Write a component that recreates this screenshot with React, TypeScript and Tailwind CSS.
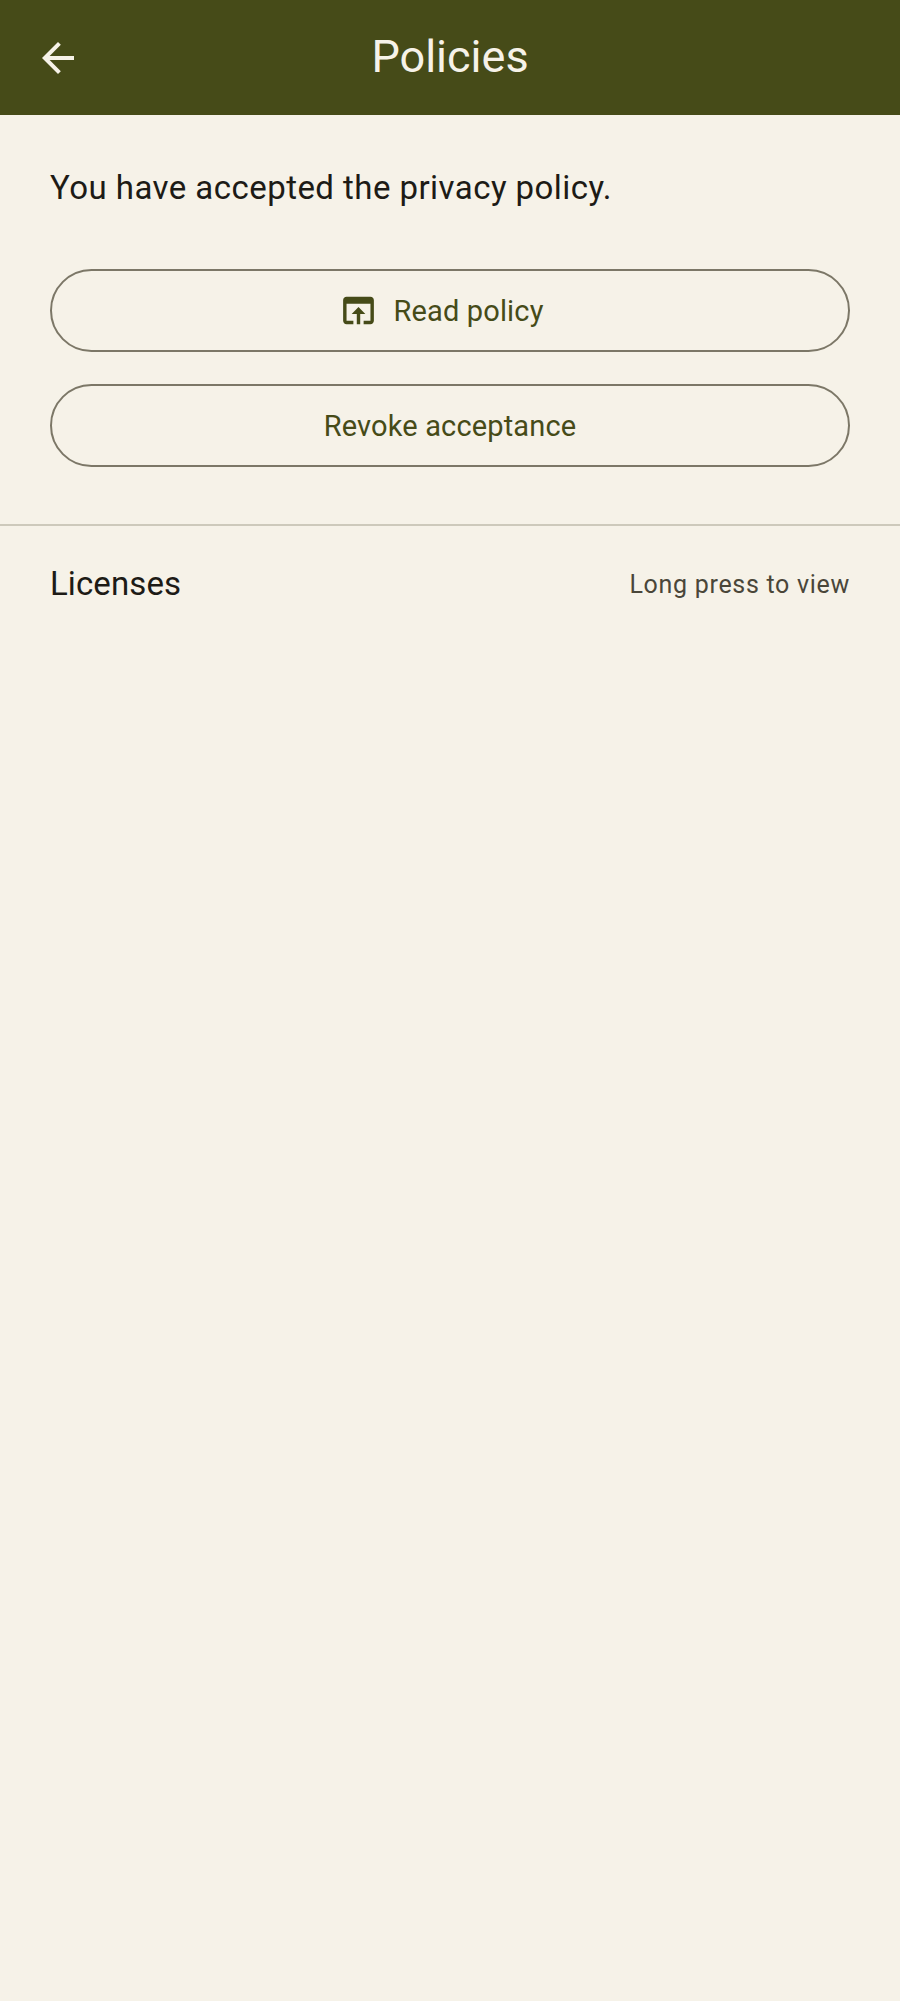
import React from "react";

function BackIcon() {
  return (
    <svg viewBox="0 0 24 24" className="w-[48px] h-[48px]" fill="#f6f2e8">
      <path d="M20 11H7.83l5.59-5.59L12 4l-8 8 8 8 1.41-1.41L7.83 13H20v-2z" />
    </svg>
  );
}

function OpenInBrowserIcon() {
  return (
    <svg viewBox="0 0 24 24" className="w-[41px] h-[41px]" fill="#464b18">
      <path d="M19 4H5c-1.11 0-2 .9-2 2v12c0 1.1.89 2 2 2h4v-2H5V8h14v10h-4v2h4c1.1 0 2-.9 2-2V6c0-1.1-.89-2-2-2zm-7 6l-4 4h3v6h2v-6h3l-4-4z" />
    </svg>
  );
}

export default function App() {
  return (
    <div className="min-h-[2001px] bg-[#f6f2e8] font-['Roboto',sans-serif]">
      {/* Top bar */}
      <div className="h-[115px] bg-[#464b18] flex items-center justify-between px-[34px]">
        <BackIcon />
        <h1 className="text-[45px] leading-[56px] mb-[2px] text-[#f6f2e8]">Policies</h1>
        <div className="w-[48px]" />
      </div>

      {/* Privacy policy */}
      <div className="px-[50px] pt-[49px] pb-[57px] border-b-2 border-[#cdc9bb]">
        <p className="text-[33px] leading-[48px] tracking-[0.45px] text-[#1d1b16]">
          You have accepted the privacy policy.
        </p>
        <div className="mt-[57px] flex flex-col gap-[32px]">
          <button className="h-[83px] rounded-full border-2 border-[#7c7767] flex items-center justify-center gap-[14px] pr-[18px] text-[29px] tracking-[0.15px] text-[#464b18]">
            <OpenInBrowserIcon />
            <span className="pt-[3px]">Read policy</span>
          </button>
          <button className="h-[83px] rounded-full border-2 border-[#7c7767] flex items-center justify-center text-[29px] tracking-[0.15px] text-[#464b18]">
            <span className="pt-[3px]">Revoke acceptance</span>
          </button>
        </div>
      </div>

      {/* Licenses */}
      <div className="px-[50px] pt-[30px] flex items-center justify-between">
        <span className="text-[33px] leading-[56px] tracking-[0.1px] text-[#1d1b16]">Licenses</span>
        <span className="text-[25px] tracking-[0.7px] pt-[1px] text-[#4a4639]">Long press to view</span>
      </div>
    </div>
  );
}
